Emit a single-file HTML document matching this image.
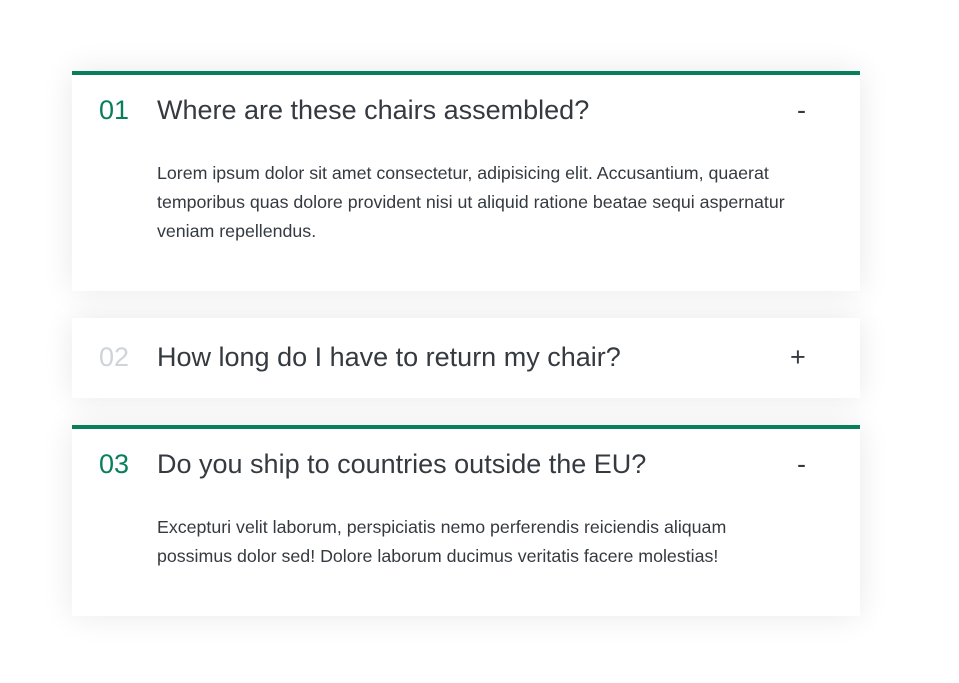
<!DOCTYPE html>
<html><head><style>
body{margin:0;background:#fff;font-family:"Liberation Sans",sans-serif;color:#343a40;}
.c{position:absolute;left:72px;width:788px;background:#fff;box-shadow:0 0 30px rgba(0,0,0,0.09);}
.o{border-top:4px solid #087f5b;}
.n,.t,.i{position:absolute;font-size:27px;line-height:32px;}
.n{left:27px;color:#087f5b;}
.t{left:85px;}
.i{left:725px;}
.b{position:absolute;left:85px;width:640px;font-size:17.8px;line-height:29px;}
</style></head><body>
<div class="c o" style="top:71px;height:216px">
 <div class="n" style="top:19px">01</div>
 <div class="t" style="top:19px">Where are these chairs assembled?</div>
 <div class="i" style="top:19px">-</div>
 <div class="b" style="top:84px">Lorem ipsum dolor sit amet consectetur, adipisicing elit. Accusantium, quaerat temporibus quas dolore provident nisi ut aliquid ratione beatae sequi aspernatur veniam repellendus.</div>
</div>
<div class="c" style="top:318px;height:80px">
 <div class="n" style="top:23px;color:#ced4da">02</div>
 <div class="t" style="top:23px">How long do I have to return my chair?</div>
 <div class="i" style="top:23px;left:718px">+</div>
</div>
<div class="c o" style="top:425px;height:187px">
 <div class="n" style="top:19px">03</div>
 <div class="t" style="top:19px">Do you ship to countries outside the EU?</div>
 <div class="i" style="top:19px">-</div>
 <div class="b" style="top:84px">Excepturi velit laborum, perspiciatis nemo perferendis reiciendis aliquam possimus dolor sed! Dolore laborum ducimus veritatis facere molestias!</div>
</div>
</body></html>
